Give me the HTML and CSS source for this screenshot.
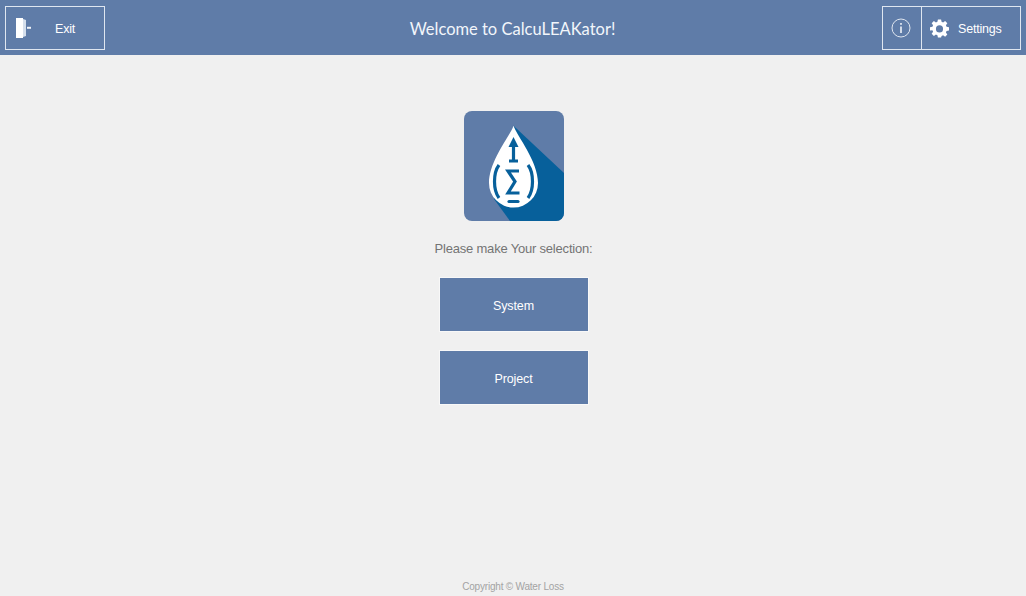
FILE: index.html
```html
<!DOCTYPE html>
<html lang="en">
<head>
    <meta charset="UTF-8">
    <meta name="viewport" content="width=device-width, initial-scale=1.0">
    <title>CalcuLEAKator</title>
    <link rel="stylesheet" href="styles.css">
</head>
<body>
    <header class="top-bar">
        <a class="bar-btn exit-btn" href="#">
            <svg class="exit-icon" viewBox="0 0 15 20" width="15" height="20">
                <path d="M0 0H7V20H0Z" fill="#fff"/>
                <path d="M7 1L10 2V18L7 19Z" fill="#d5dfec"/>
                <path d="M11 8.800H15V10.800H11Z" fill="#f2f5fa"/>
            </svg>
            <span>Exit</span>
        </a>
        <h1 class="title">Welcome to CalcuLEAKator!</h1>
        <div class="bar-group">
            <a class="bar-btn info-btn" href="#">
                <svg viewBox="0 0 20 20" width="20" height="20">
                    <circle cx="10" cy="10" r="9" fill="none" stroke="#dfe6f0" stroke-width="1"/>
                    <rect x="9.200" y="8.500" width="1.600" height="6.500" fill="#eef2f8"/>
                    <rect x="9.200" y="5" width="1.600" height="1.800" fill="#eef2f8"/>
                </svg>
            </a>
            <a class="bar-btn settings-btn" href="#">
                <svg viewBox="0 0 24 24" width="19" height="19">
                    <path fill="#fff" fill-rule="evenodd" d="M10 1h4l.6 3.100 1.900.8L19.100 3.100l2.800 2.800-1.800 2.600.8 1.900L24 11v4l-3.100.6-.8 1.900 1.800 2.600-2.800 2.800-2.600-1.800-1.900.8L14 24h-4l-.6-3.100-1.900-.8-2.600 1.800-2.800-2.800 1.800-2.600-.8-1.900L0 15v-4l3.100-.6.800-1.900-1.800-2.600 2.800-2.800 2.600 1.800 1.900-.8ZM12 8.500a4.500 4.500 0 1 0 0 9 4.500 4.500 0 0 0 0-9Z" transform="translate(0 -.5)"/>
                </svg>
                <span class="bar-label">Settings</span>
            </a>
        </div>
    </header>

    <main class="content">
        <svg class="logo" viewBox="0 0 100 110" width="100" height="110">
            <rect width="100" height="110" rx="8" fill="#5f7ca8"/>
            <path d="M49.500 14.700L100 62V102a8 8 0 0 1-8 8H46L30 88Z" fill="#07609b"/>
            <path d="M49.500 14.700C46 25 25 50 25 72a24.500 24.500 0 0 0 49 0C74 50 53 25 49.500 14.700Z" fill="#fff"/>
            <g fill="none" stroke="#07609b" stroke-width="3.200">
                <path d="M49.500 33V50M45 50H54"/>
                <path d="M55 60H44L51 70.500L44 82H55.500"/>
                <path d="M35 54C29 62 29 79 35 87M64 54C70 62 70 79 64 87"/>
                <path d="M45 90.500H54" stroke-linecap="round"/>
            </g>
            <path d="M49.500 26L54.500 36H44.500Z" fill="#07609b"/>
        </svg>
        <p class="prompt">Please make Your selection:</p>
        <a class="select-btn" href="#">System</a>
        <a class="select-btn" href="#">Project</a>
    </main>

    <footer class="copyright">Copyright © Water Loss</footer>
</body>
</html>
```

FILE: styles.css
```css
* {
    box-sizing: border-box;
}
html, body {
    height: 100%;
}
body {
    margin: 0;
    display: flex;
    flex-direction: column;
    background-color: #f0f0f0;
    font-family: "Liberation Sans", Arial, sans-serif;
    overflow: hidden;
}
a {
    text-decoration: none;
    color: #fff;
}
.top-bar {
    height: 55px;
    flex-shrink: 0;
    padding: 6px 5px 5px;
    display: grid;
    grid-template-columns: 1fr auto 1fr;
    background-color: #5f7ca8;
}
.title {
    margin: 0;
    padding: 2px 1px 0 0;
    align-self: center;
    color: #f2f6fb;
    font-family: Lato, sans-serif;
    font-size: 16.5px;
    font-weight: 400;
}
.bar-group {
    display: flex;
    justify-self: end;
}
.bar-btn {
    display: flex;
    align-items: center;
    border: 1px solid #dfe6f0;
    font-size: 12.5px;
    letter-spacing: -0.2px;
}
.bar-btn span {
    padding-top: 2px;
}
.exit-btn {
    width: 100px;
    justify-self: start;
    padding-left: 10px;
    gap: 24px;
}
.info-btn {
    width: 39px;
    padding-right: 2px;
    justify-content: center;
    border-right: 0;
}
.settings-btn {
    width: 100px;
    padding-left: 8px;
    gap: 9px;
}
.content {
    flex: 1;
    padding: 56px 0 0 1px;
    display: flex;
    flex-direction: column;
    align-items: center;
}
.logo {
    display: block;
}
.prompt {
    margin: 20px 0 0;
    height: 16px;
    line-height: 15px;
    color: #747474;
    font-size: 13px;
    letter-spacing: -0.2px;
}
.select-btn {
    width: 150px;
    height: 55px;
    margin-top: 18px;
    padding-top: 3px;
    display: flex;
    align-items: center;
    justify-content: center;
    background-color: #5f7ca8;
    border: 1px solid #f8f8f8;
    font-size: 12.5px;
    letter-spacing: -0.1px;
}
.prompt + .select-btn {
    margin-top: 20px;
}
.copyright {
    height: 15px;
    line-height: 12px;
    text-align: center;
    color: #a3a3a3;
    font-size: 10px;
    letter-spacing: -0.2px;
}
```
